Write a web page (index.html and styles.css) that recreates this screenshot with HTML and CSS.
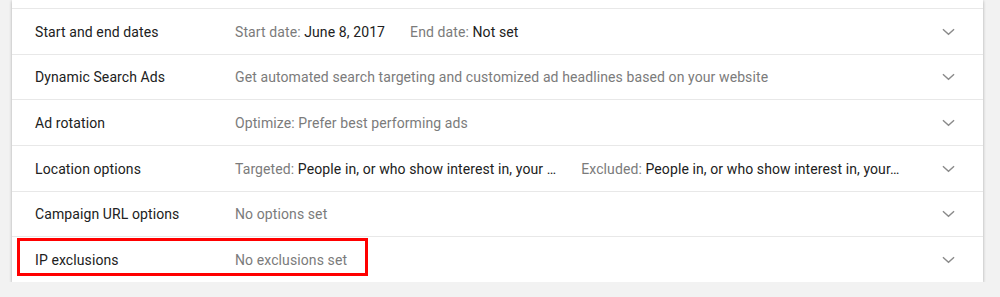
FILE: index.html
```html
<!DOCTYPE html>
<html lang="en">
<head>
    <meta charset="UTF-8">
    <meta name="viewport" content="width=device-width, initial-scale=1.0">
    <title>Campaign settings</title>
    <link rel="stylesheet" href="styles.css">
</head>
<body>

    <div class="card">
        <div class="row-cut"></div>

        <div class="row">
            <div class="label">Start and end dates</div>
            <div class="summary">
                <span class="item"><span class="muted">Start date:</span> June 8, 2017</span>
                <span class="item"><span class="muted">End date:</span> Not set</span>
            </div>
            <svg class="chevron" viewBox="0 0 14 8"><path d="M1 1l6 5.5 6-5.5"/></svg>
        </div>

        <div class="row">
            <div class="label">Dynamic Search Ads</div>
            <div class="summary muted">Get automated search targeting and customized ad headlines based on your website</div>
            <svg class="chevron" viewBox="0 0 14 8"><path d="M1 1l6 5.5 6-5.5"/></svg>
        </div>

        <div class="row">
            <div class="label">Ad rotation</div>
            <div class="summary muted">Optimize: Prefer best performing ads</div>
            <svg class="chevron" viewBox="0 0 14 8"><path d="M1 1l6 5.5 6-5.5"/></svg>
        </div>

        <div class="row">
            <div class="label">Location options</div>
            <div class="summary">
                <span class="item"><span class="muted">Targeted:</span> People in, or who show interest in, your …</span>
                <span class="item"><span class="muted">Excluded:</span> People in, or who show interest in, your…</span>
            </div>
            <svg class="chevron" viewBox="0 0 14 8"><path d="M1 1l6 5.5 6-5.5"/></svg>
        </div>

        <div class="row">
            <div class="label">Campaign URL options</div>
            <div class="summary muted">No options set</div>
            <svg class="chevron" viewBox="0 0 14 8"><path d="M1 1l6 5.5 6-5.5"/></svg>
        </div>

        <div class="row">
            <div class="label">IP exclusions</div>
            <div class="summary muted">No exclusions set</div>
            <svg class="chevron" viewBox="0 0 14 8"><path d="M1 1l6 5.5 6-5.5"/></svg>
            <div class="highlight"></div>
        </div>
    </div>

</body>
</html>
```

FILE: styles.css
```css
body {
    font-family: 'Roboto', 'Liberation Sans', sans-serif;
    background-color: #f2f2f2;
    margin: 0;
    padding: 0;
}
.card {
    margin-left: 12px;
    width: 971px;
    background-color: #fff;
    box-shadow: 0 1px 3px rgba(0, 0, 0, 0.3);
}
.row-cut {
    height: 8px;
}
.row {
    position: relative;
    display: flex;
    align-items: center;
    height: 45.67px;
    box-sizing: border-box;
    border-top: 1px solid #e8e8e8;
    padding-top: 1px;
    padding-left: 23px;
    padding-right: 28px;
    font-size: 14px;
    letter-spacing: 0.1px;
    color: #212121;
}
.label {
    width: 200px;
    flex-shrink: 0;
}
.summary {
    flex: 1;
    display: flex;
    gap: 25px;
    white-space: nowrap;
}
.muted {
    color: #7b7b7b;
}
.chevron {
    width: 13px;
    height: 8px;
    fill: none;
    stroke: #8a8a8a;
    stroke-width: 1.5;
}
.highlight {
    position: absolute;
    left: 5px;
    top: 1px;
    width: 345px;
    height: 32px;
    border: 3px solid #f00;
}
```
